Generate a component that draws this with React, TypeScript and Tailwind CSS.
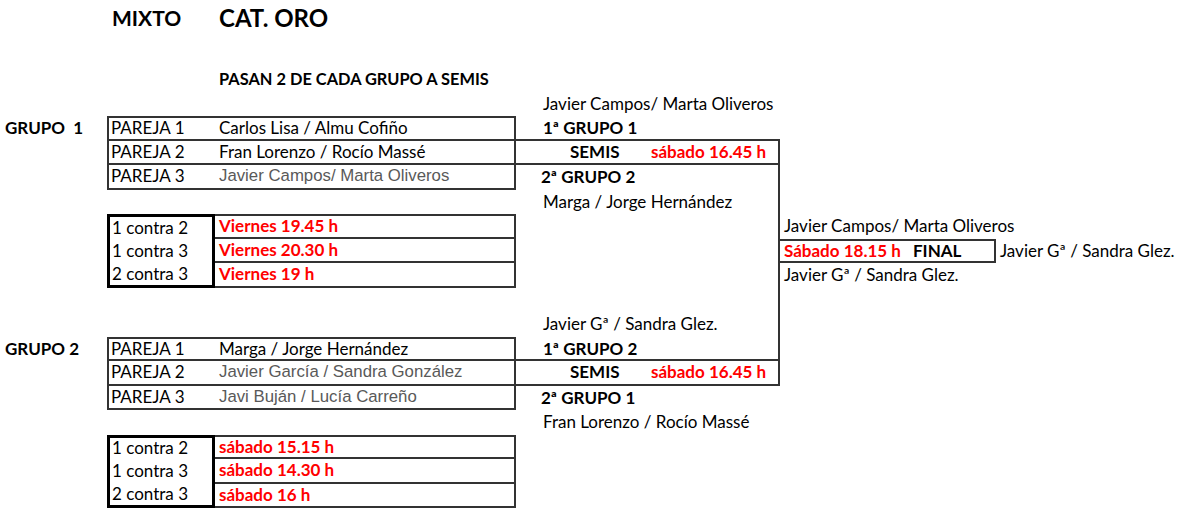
import type { ReactNode } from "react"

const Row = ({ children, className = "" }: { children: ReactNode; className?: string }) => (
  <div className={`grid grid-cols-[107px_108px_301px_264px_216px_1fr] h-[24.5px] ${className}`}>{children}</div>
)

const Cell = ({ children, className = "" }: { children?: ReactNode; className?: string }) => (
  <div className={`flex items-center leading-[18px] whitespace-pre overflow-visible ${className}`}>{children}</div>
)

const gray = "font-['Liberation_Sans',Arial,sans-serif] text-[16.8px] text-[#595959]"
const red = "text-[#ff0000] font-bold"
const line = "border-[#333]"

const App = () => {
  return (
    <div className="w-[1200px] h-[512px] bg-white font-['Lato',sans-serif] text-[17px] text-black overflow-hidden">
      {/* cabecera */}
      <div className="grid grid-cols-[107px_108px_301px_264px_216px_1fr] h-[34px] items-center">
        <div />
        <div className="pl-[5px] font-bold text-[21px]">MIXTO</div>
        <div className="pl-[4px] font-bold text-[24px]">CAT. ORO</div>
      </div>
      <div className="h-[33px]" />
      <Row>
        <Cell /><Cell />
        <Cell className="pl-1 font-bold text-[16.4px]">PASAN 2 DE CADA GRUPO A SEMIS</Cell>
      </Row>
      <Row>
        <Cell /><Cell /><Cell />
        <Cell className="pl-[27px]">Javier Campos/ Marta Oliveros</Cell>
      </Row>

      {/* grupo 1 */}
      <Row>
        <Cell className="pl-[5px] font-bold">GRUPO  1</Cell>
        <Cell className={`pl-[2px] border-l-2 border-t-2 border-b-2 ${line}`}>PAREJA 1</Cell>
        <Cell className={`pl-1 border-r-2 border-t-2 border-b-2 ${line}`}>Carlos Lisa / Almu Cofiño</Cell>
        <Cell className="pl-[27px] font-bold">1ª GRUPO 1</Cell>
      </Row>
      <Row>
        <Cell />
        <Cell className={`pl-[2px] border-l-2 border-b-2 ${line}`}>PAREJA 2</Cell>
        <Cell className={`pl-1 border-r-2 border-b-2 ${line}`}>Fran Lorenzo / Rocío Massé</Cell>
        <Cell className={`border-b-2 border-r-2 ${line} -mt-[2px] h-[26.5px] border-t-2`}>
          <span className="ml-[54px] w-[81px] font-bold">SEMIS</span>
          <span className={red}>sábado 16.45 h</span>
        </Cell>
      </Row>
      <Row>
        <Cell />
        <Cell className={`pl-[2px] border-l-2 border-b-2 ${line}`}>PAREJA 3</Cell>
        <Cell className={`pl-1 border-r-2 border-b-2 ${line} ${gray}`}>Javier Campos/ Marta Oliveros</Cell>
        <Cell className={`pl-[25px] font-bold border-r-2 ${line}`}>2ª GRUPO 2</Cell>
      </Row>
      <Row>
        <Cell /><Cell /><Cell />
        <Cell className={`pl-[27px] border-r-2 ${line}`}>Marga / Jorge Hernández</Cell>
      </Row>

      {/* partidos grupo 1 */}
      <Row>
        <Cell />
        <Cell className="pl-[2px] border-l-[3px] border-r-[3px] border-t-[3px] border-black">1 contra 2</Cell>
        <Cell className={`pl-1 border-t-2 border-b-2 border-r-2 ${line} ${red}`}>Viernes 19.45 h</Cell>
        <Cell className={`border-r-2 ${line}`} />
        <Cell className="pl-1">Javier Campos/ Marta Oliveros</Cell>
      </Row>
      <Row>
        <Cell />
        <Cell className="pl-[2px] border-l-[3px] border-r-[3px] border-black">1 contra 3</Cell>
        <Cell className={`pl-1 border-b-2 border-r-2 ${line} ${red}`}>Viernes 20.30 h</Cell>
        <Cell className={`border-r-2 ${line}`} />
        <Cell className={`pl-1 border-t-2 border-b-2 border-r-2 ${line}`}>
          <span className={`w-[129px] ${red}`}>Sábado 18.15 h</span>
          <span className="font-bold">FINAL</span>
        </Cell>
        <Cell className="pl-1">Javier Gª / Sandra Glez.</Cell>
      </Row>
      <Row>
        <Cell />
        <Cell className="pl-[2px] border-l-[3px] border-r-[3px] border-b-[3px] border-black">2 contra 3</Cell>
        <Cell className={`pl-1 border-b-2 border-r-2 ${line} ${red}`}>Viernes 19 h</Cell>
        <Cell className={`border-r-2 ${line}`} />
        <Cell className="pl-1">Javier Gª / Sandra Glez.</Cell>
      </Row>
      <Row>
        <Cell /><Cell /><Cell />
        <Cell className={`border-r-2 ${line}`} />
      </Row>
      <Row>
        <Cell /><Cell /><Cell />
        <Cell className={`pl-[27px] border-r-2 ${line}`}>Javier Gª / Sandra Glez.</Cell>
      </Row>

      {/* grupo 2 */}
      <Row>
        <Cell className="pl-[5px] font-bold">GRUPO 2</Cell>
        <Cell className={`pl-[2px] border-l-2 border-t-2 border-b-2 ${line}`}>PAREJA 1</Cell>
        <Cell className={`pl-1 border-r-2 border-t-2 border-b-2 ${line}`}>Marga / Jorge Hernández</Cell>
        <Cell className={`pl-[27px] font-bold border-r-2 ${line}`}>1ª GRUPO 2</Cell>
      </Row>
      <Row>
        <Cell />
        <Cell className={`pl-[2px] border-l-2 border-b-2 ${line}`}>PAREJA 2</Cell>
        <Cell className={`pl-1 border-r-2 border-b-2 ${line} ${gray}`}>Javier García / Sandra González</Cell>
        <Cell className={`border-b-2 border-r-2 ${line} -mt-[2px] h-[26.5px] border-t-2`}>
          <span className="ml-[54px] w-[81px] font-bold">SEMIS</span>
          <span className={red}>sábado 16.45 h</span>
        </Cell>
      </Row>
      <Row>
        <Cell />
        <Cell className={`pl-[2px] border-l-2 border-b-2 ${line}`}>PAREJA 3</Cell>
        <Cell className={`pl-1 border-r-2 border-b-2 ${line} ${gray}`}>Javi Buján / Lucía Carreño</Cell>
        <Cell className="pl-[25px] font-bold">2ª GRUPO 1</Cell>
      </Row>
      <Row>
        <Cell /><Cell /><Cell />
        <Cell className="pl-[27px]">Fran Lorenzo / Rocío Massé</Cell>
      </Row>

      {/* partidos grupo 2 */}
      <Row>
        <Cell />
        <Cell className="pl-[2px] border-l-[3px] border-r-[3px] border-t-[3px] border-black">1 contra 2</Cell>
        <Cell className={`pl-1 border-t-2 border-b-2 border-r-2 ${line} ${red}`}>sábado 15.15 h</Cell>
      </Row>
      <Row>
        <Cell />
        <Cell className="pl-[2px] border-l-[3px] border-r-[3px] border-black">1 contra 3</Cell>
        <Cell className={`pl-1 border-b-2 border-r-2 ${line} ${red}`}>sábado 14.30 h</Cell>
      </Row>
      <Row>
        <Cell />
        <Cell className="pl-[2px] border-l-[3px] border-r-[3px] border-b-[3px] border-black">2 contra 3</Cell>
        <Cell className={`pl-1 border-b-2 border-r-2 ${line} ${red}`}>sábado 16 h</Cell>
      </Row>
    </div>
  )
}

export default App
